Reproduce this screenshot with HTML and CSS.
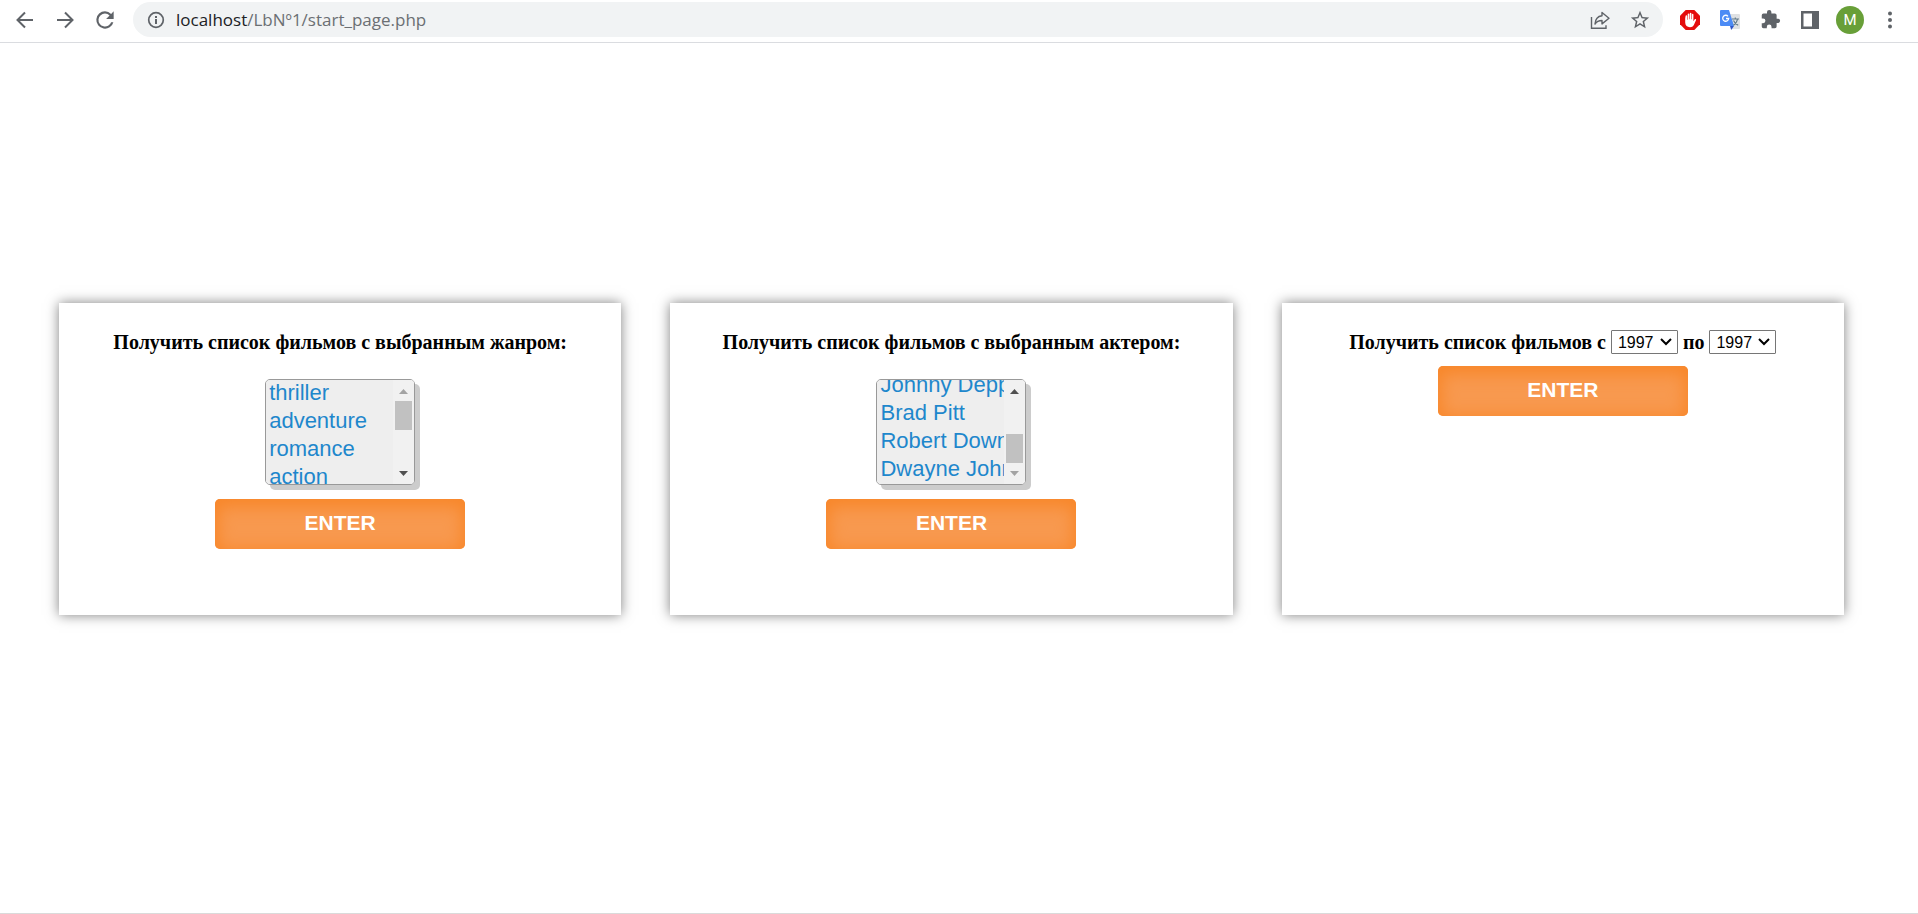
FILE: index.html
```html
<!DOCTYPE html>
<html lang="ru">
<head>
<meta charset="utf-8">
<title>start_page</title>
<link rel="stylesheet" href="styles.css">
</head>
<body>
<header class="toolbar">
  <div class="nav">
    <button class="icon-btn" type="button" aria-label="Back"><svg width="24" height="24" viewBox="0 0 24 24"><path d="M20 12H5M12 4.500L4.500 12l7.500 7.500" fill="none" stroke="#5f6368" stroke-width="2"/></svg></button>
    <button class="icon-btn" type="button" aria-label="Forward"><svg width="24" height="24" viewBox="0 0 24 24"><path d="M4 12h15M12 4.500l7.500 7.500-7.500 7.500" fill="none" stroke="#5f6368" stroke-width="2"/></svg></button>
    <button class="icon-btn" type="button" aria-label="Reload"><svg width="26" height="26" viewBox="0 0 24 24"><path fill="#5f6368" d="M17.650 6.350A7.960 7.960 0 0 0 12 4a8 8 0 1 0 7.730 10h-2.080A6 6 0 1 1 12 6c1.660 0 3.140.690 4.220 1.780L13 11h7V4z"/></svg></button>
  </div>
  <div class="address">
    <svg width="18" height="18" viewBox="0 0 18 18"><circle cx="9" cy="9" r="7.300" fill="none" stroke="#5f6368" stroke-width="1.700"/><path d="M8 8h2v5H8zM8 5h2v2H8z" fill="#5f6368"/></svg>
    <label class="host" for="url">localhost</label>
    <input class="path" id="url" type="text" value="/LbNº1/start_page.php">
    <button class="icon-btn" type="button" aria-label="Share"><svg width="22" height="22" viewBox="0 0 22 22"><path d="M2.500 8v11.300h14.500v-3" fill="none" stroke="#5f6368" stroke-width="1.400"/><path d="M13 3.500l7 5.700-7 5.700v-3.400c-3.300 0-5.400 1-7 3.600.300-4.800 2.700-7.800 7-8.300z" fill="none" stroke="#5f6368" stroke-width="1.400" stroke-linejoin="round"/></svg></button>
    <button class="icon-btn" type="button" aria-label="Bookmark"><svg width="22" height="22" viewBox="0 0 24 24"><path fill="#5f6368" d="M22 9.240l-7.190-.620L12 2 9.190 8.630 2 9.240l5.460 4.730L5.820 21 12 17.270 18.180 21l-1.630-7.030zM12 15.400l-3.760 2.270 1-4.280-3.320-2.880 4.380-.380L12 6.100l1.710 4.040 4.380.380-3.320 2.880 1 4.280z"/></svg></button>
  </div>
  <div class="extensions">
    <button class="icon-btn" type="button" aria-label="Blocker"><svg width="22" height="22" viewBox="0 0 22 22"><path d="M6.700 1h8.600L21 6.700v8.600L15.300 21H6.700L1 15.300V6.700z" fill="#e40d0d"/><path d="M6.200 9.200v4.300c0 2.800 2 4.700 4.700 4.700 2.300 0 3.500-1.200 4.300-3l1.900-4.200c.2-1-1-1.300-1.500-.5l-1.200 1.700V5.600c0-1.100-1.500-1.100-1.500 0v4.600h-.5V4.500c0-1.100-1.600-1.100-1.600 0v5.700h-.5V5.300c0-1.100-1.600-1.100-1.600 0v5.400h-.5V7c0-1.100-1.600-1.100-1.600 0z" fill="#fff"/></svg></button>
    <button class="icon-btn" type="button" aria-label="Translate"><svg width="22" height="22" viewBox="0 0 22 22"><path d="M9 5h11a1 1 0 0 1 1 1v13a1 1 0 0 1-1 1h-8z" fill="#dfe1e3"/><path d="M11 17h4l-2.800 4z" fill="#2f56c9"/><path d="M2 1h8l5 16H2a1 1 0 0 1-1-1V2a1 1 0 0 1 1-1z" fill="#4c8bf5"/><path d="M9 7.300A3 3 0 1 0 9.700 9.500H7" fill="none" stroke="#fff" stroke-width="1.300"/><path d="M13 10h7M16.300 8.500V10M18.500 10c-.5 3-2 5-4 6.300M14.500 11.500c.8 2 2.500 3.800 4.700 4.800" fill="none" stroke="#607988" stroke-width="1.100"/></svg></button>
    <button class="icon-btn" type="button" aria-label="Extensions"><svg width="21" height="21" viewBox="0 0 24 24"><path fill="#5f6368" d="M20.500 11H19V7a2 2 0 0 0-2-2h-4V3.500a2.500 2.500 0 0 0-5 0V5H4a2 2 0 0 0-2 2v3.800h1.500a2.700 2.700 0 0 1 0 5.400H2V20a2 2 0 0 0 2 2h3.800v-1.500a2.700 2.700 0 0 1 5.400 0V22H17a2 2 0 0 0 2-2v-4h1.500a2.500 2.500 0 0 0 0-5z"/></svg></button>
    <button class="icon-btn" type="button" aria-label="Side panel"><svg width="18" height="18" viewBox="0 0 18 18"><path fill="#5f6368" fill-rule="evenodd" d="M0 0h18v18H0zM2.500 2.500v13H11v-13z"/></svg></button>
    <button class="icon-btn" type="button" aria-label="Profile"><span class="avatar">M</span></button>
    <button class="icon-btn" type="button" aria-label="Menu"><svg width="18" height="18" viewBox="0 0 18 18"><g fill="#5f6368"><circle cx="9" cy="2.500" r="2"/><circle cx="9" cy="9" r="2"/><circle cx="9" cy="15.500" r="2"/></g></svg></button>
  </div>
</header>
<main class="page">
  <form class="card">
    <label class="title" for="genre">Получить список фильмов с выбранным жанром:</label>
    <div class="list-box">
      <select class="list" id="genre" size="4">
        <option>thriller</option><option>adventure</option><option>romance</option><option>action</option>
        <option>comedy</option><option>drama</option><option>fantasy</option><option>horror</option>
      </select>
      <div class="scrollbar at-top" aria-hidden="true">
        <svg class="arrow up" width="9" height="5" viewBox="0 0 9 5"><path d="M0 5L4.500 0 9 5z"/></svg>
        <span class="thumb"></span>
        <svg class="arrow down" width="9" height="5" viewBox="0 0 9 5"><path d="M0 0l4.500 5L9 0z"/></svg>
      </div>
    </div>
    <button class="enter" type="button">ENTER</button>
  </form>
  <form class="card">
    <label class="title" for="actor">Получить список фильмов с выбранным актером:</label>
    <div class="list-box">
      <select class="list" id="actor" size="4">
        <option>Tom Hanks</option><option>Emma Stone</option><option>Will Smith</option><option>Matt Damon</option>
        <option>Johnny Depp</option><option>Brad Pitt</option><option>Robert Downey Jr.</option><option>Dwayne Johnson</option>
      </select>
      <div class="scrollbar at-end" aria-hidden="true">
        <svg class="arrow up" width="9" height="5" viewBox="0 0 9 5"><path d="M0 5L4.500 0 9 5z"/></svg>
        <span class="thumb"></span>
        <svg class="arrow down" width="9" height="5" viewBox="0 0 9 5"><path d="M0 0l4.500 5L9 0z"/></svg>
      </div>
    </div>
    <button class="enter" type="button">ENTER</button>
  </form>
  <form class="card">
    <div class="title years">
      <label for="from">Получить список фильмов с</label>
      <select class="year" id="from"><option>1997</option></select>
      <label for="to">по</label>
      <select class="year" id="to"><option>1997</option></select>
    </div>
    <button class="enter" type="button">ENTER</button>
  </form>
</main>
<script src="script.js"></script>
</body>
</html>
```
FILE: styles.css
```css
* { box-sizing: border-box; }
body {
  margin: 0;
  min-height: 100vh;
  display: flex;
  flex-direction: column;
  background: #fff;
  font-family: "Liberation Serif", serif;
}
button { border: 0; padding: 0; background: none; }

.toolbar {
  display: flex;
  align-items: flex-start;
  height: 43px;
  padding: 2px 8px 0 5px;
  border-bottom: 1px solid #dadce0;
}
.nav, .extensions { display: flex; }
.icon-btn {
  display: flex;
  align-items: center;
  justify-content: center;
  width: 40px;
  height: 35px;
}
.address {
  flex: 1;
  display: flex;
  align-items: center;
  height: 35px;
  margin: 0 7px 0 8px;
  padding: 0 3px 0 14px;
  border-radius: 18px;
  background: #f1f3f4;
  font: 17px/24px "Open Sans", sans-serif;
}
.host { margin-left: 11px; color: #202124; }
.path {
  flex: 1;
  min-width: 0;
  padding: 0;
  border: 0;
  outline: 0;
  background: none;
  color: #6b6f73;
  font: inherit;
}
.avatar {
  width: 28px;
  height: 28px;
  border-radius: 50%;
  background: #689f38;
  color: #fff;
  font: 15px/28px Roboto, sans-serif;
  text-align: center;
}

.page {
  flex: 1;
  display: grid;
  grid-template-columns: repeat(3, 1fr);
  align-items: start;
  gap: 49px;
  padding: 260px 74px 40px 59px;
  border-bottom: 1px solid #dadada;
}
.card {
  display: flex;
  flex-direction: column;
  align-items: center;
  min-height: 312px;
  padding: 27px 20px;
  background: #fff;
  box-shadow: 0 0 12px rgba(0, 0, 0, 0.5);
}
.title {
  margin-bottom: 25px;
  color: #000;
  font-size: 20px;
  font-weight: bold;
  line-height: 24px;
}
.years {
  display: flex;
  align-items: center;
  gap: 5px;
  margin-bottom: 12px;
}
.year {
  appearance: none;
  width: 67px;
  height: 24px;
  padding: 0 0 0 6px;
  border: 1px solid #767676;
  border-radius: 1px;
  background: #fff url("data:image/svg+xml,%3Csvg xmlns='http://www.w3.org/2000/svg' width='12' height='8'%3E%3Cpath d='M1 1l5 5 5-5' fill='none' stroke='%23000' stroke-width='2'/%3E%3C/svg%3E") right 5px center no-repeat;
  color: #000;
  font: 16px "Liberation Sans", sans-serif;
}

.list-box {
  position: relative;
  width: 150px;
  height: 106px;
  margin-bottom: 14px;
  overflow: hidden;
  border: 1px solid #999;
  border-radius: 5px;
  background: #eee;
}
.list-box { overflow: visible; box-shadow: 5px 5px 0 #ccc; }
.list {
  display: block;
  width: 100%;
  height: 100%;
  padding: 0;
  border: 0;
  border-radius: 4px;
  outline: 0;
  background: #eee;
  color: #1e87cc;
  font: 22px "Liberation Sans", sans-serif;
}
.list option {
  height: 28px;
  min-height: 28px;
  padding: 0 3px;
  line-height: 28px;
}
.scrollbar {
  position: absolute;
  top: 0;
  right: 0;
  bottom: 0;
  width: 21px;
  display: flex;
  flex-direction: column;
  align-items: center;
  padding: 9px 0 8px;
  border-radius: 0 4px 4px 0;
  background: #f1f1f1;
  pointer-events: none;
}
.arrow { flex: none; fill: #505050; }
.thumb { width: 17px; height: 29px; background: #c1c1c1; }
.at-top .thumb { margin: 7px 0 auto; }
.at-end .thumb { margin: auto 0 8px; }
.at-top .up, .at-end .down { fill: #a3a3a3; }

.enter {
  width: 250px;
  height: 50px;
  padding-bottom: 2px;
  border-radius: 5px;
  background: #f8994f;
  box-shadow: inset 0 4px 16px 4px #f8872a;
  color: #fff;
  font: bold 21px "Liberation Sans", sans-serif;
}
```
FILE: script.js
```js
const actors = document.getElementById("actor");
actors.scrollTop = actors.scrollHeight;
```
